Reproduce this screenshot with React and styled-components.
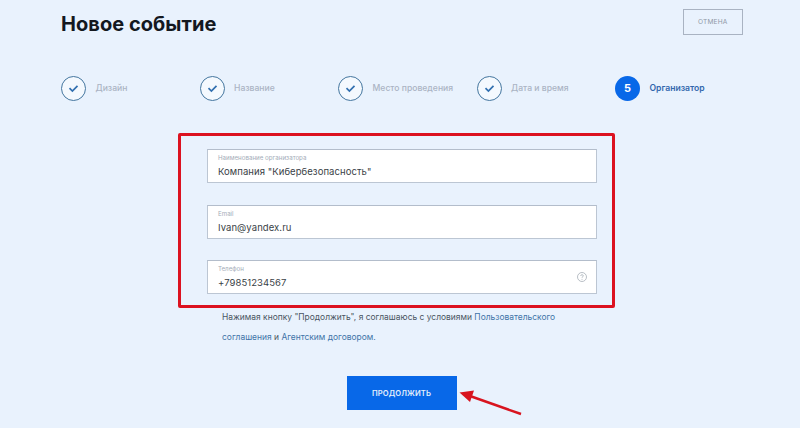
import React from "react";
import styled, { createGlobalStyle } from "styled-components";

const Global = createGlobalStyle`
  html, body { margin: 0; padding: 0; background: #e9f2fd; }
  body { font-family: Inter, "Liberation Sans", sans-serif; }
`;

const Page = styled.div`
  position: relative;
  width: 800px;
  height: 428px;
  overflow: hidden;
  background: #e9f2fd;
  padding: 9px 57.5px 0 61px;
  box-sizing: border-box;
`;

const Header = styled.header`
  display: flex;
  justify-content: space-between;
  align-items: flex-start;
  height: 67px;
`;

const Title = styled.h1`
  margin: 0;
  padding-top: 1px;
  font-size: 20px;
  line-height: 28px;
  font-weight: 700;
  letter-spacing: 0.05px;
  color: #14181f;
`;

const CancelButton = styled.button`
  width: 59.5px;
  height: 25.5px;
  padding: 0;
  background: transparent;
  border: 1px solid #a9b3c2;
  font: 400 6.6px Inter, sans-serif;
  letter-spacing: 0.2px;
  color: #8f98a6;
`;

const Steps = styled.ol`
  display: grid;
  grid-template-columns: repeat(5, 138.5px);
  margin: 0;
  padding: 0;
  list-style: none;
`;

const Step = styled.li`
  display: flex;
  align-items: center;
  gap: 9.5px;
  height: 24px;
`;

const StepCircle = styled.span`
  width: 25px;
  height: 25px;
  box-sizing: border-box;
  flex: none;
  display: flex;
  align-items: center;
  justify-content: center;
  border-radius: 50%;
  background: ${(p) => (p.$active ? "#0868e8" : "#f4f9fe")};
  border: ${(p) => (p.$active ? "none" : "1.5px solid #44769f")};
  color: #fff;
  font-size: 11px;
  font-weight: 700;
`;

const StepLabel = styled.span`
  font-size: 8.6px;
  font-weight: ${(p) => (p.$active ? 600 : 500)};
  color: ${(p) => (p.$active ? "#3268ad" : "#abb4c4")};
  white-space: nowrap;
`;

const Form = styled.form`
  display: flex;
  flex-direction: column;
  gap: 21.5px;
  width: 390px;
  margin: 49px 0 0 146px;
`;

const Field = styled.div`
  position: relative;
  height: 34px;
  box-sizing: border-box;
  padding: 4px 10px 0;
  background: #fff;
  border: 1px solid #bcc6d3;
  border-top-color: #b3bdcb;
`;

const FieldLabel = styled.div`
  font-size: 6.2px;
  line-height: 8px;
  color: #a4acb8;
`;

const FieldValue = styled.div`
  margin-top: 2px;
  font-size: 9.5px;
  line-height: 15px;
  color: #3a3f47;
  letter-spacing: 0.07px;
`;

const HelpIcon = styled.svg`
  position: absolute;
  right: 9.5px;
  top: 11px;
  width: 10px;
  height: 10px;
`;

const Agreement = styled.p`
  margin: 13px 0 0 161px;
  width: 345px;
  font-size: 8.45px;
  line-height: 20px;
  color: #4a5562;
`;

const AgreementLink = styled.a`
  color: #3f74a8;
`;

const ContinueButton = styled.button`
  display: block;
  width: 110px;
  height: 34px;
  margin: 29px 0 0 285.5px;
  padding: 0;
  border: none;
  background: #0868e8;
  color: #e4effc;
  font: 600 7.6px Inter, sans-serif;
  letter-spacing: 0.1px;
`;

const Highlight = styled.div`
  position: absolute;
  left: 178px;
  top: 133px;
  width: 437px;
  height: 175px;
  box-sizing: border-box;
  border: 3px solid #dc1220;
  border-radius: 2px;
  pointer-events: none;
`;

const Arrow = styled.svg`
  position: absolute;
  left: 450px;
  top: 385px;
  width: 80px;
  height: 36px;
  pointer-events: none;
`;

const Check = () => (
  <svg width="11" height="9" viewBox="0 0 11 9" fill="none">
    <path d="M1.5 4.2 4.4 7 9.5 1.8" stroke="#3270b0" strokeWidth="1.7" />
  </svg>
);

const steps = ["Дизайн", "Название", "Место проведения", "Дата и время"];

export default function App() {
  return (
    <Page>
      <Global />
      <Header>
        <Title>Новое событие</Title>
        <CancelButton type="button">ОТМЕНА</CancelButton>
      </Header>
      <Steps>
        {steps.map((s) => (
          <Step key={s}>
            <StepCircle><Check /></StepCircle>
            <StepLabel>{s}</StepLabel>
          </Step>
        ))}
        <Step>
          <StepCircle $active>5</StepCircle>
          <StepLabel $active>Организатор</StepLabel>
        </Step>
      </Steps>
      <Form>
        <Field>
          <FieldLabel>Наименование организатора</FieldLabel>
          <FieldValue>Компания "Кибербезопасность"</FieldValue>
        </Field>
        <Field>
          <FieldLabel>Email</FieldLabel>
          <FieldValue>Ivan@yandex.ru</FieldValue>
        </Field>
        <Field>
          <FieldLabel>Телефон</FieldLabel>
          <FieldValue>+79851234567</FieldValue>
          <HelpIcon viewBox="0 0 10 10" fill="none">
            <circle cx="5" cy="5" r="4.5" stroke="#a7aeb8" strokeWidth="0.8" />
            <path d="M3.7 3.9C3.7 3.1 4.3 2.7 5 2.7s1.3.4 1.3 1.1c0 .9-1.3 1-1.3 2" stroke="#a7aeb8" strokeWidth="0.8" />
            <circle cx="5" cy="7.3" r="0.5" fill="#a7aeb8" />
          </HelpIcon>
        </Field>
      </Form>
      <Agreement>
        Нажимая кнопку "Продолжить", я соглашаюсь с условиями{" "}
        <AgreementLink>Пользовательского</AgreementLink>{" "}
        <AgreementLink>соглашения</AgreementLink> и{" "}
        <AgreementLink>Агентским договором.</AgreementLink>
      </Agreement>
      <ContinueButton type="button">ПРОДОЛЖИТЬ</ContinueButton>
      <Highlight />
      <Arrow viewBox="0 0 80 36">
        <path d="M71 29 20 11" stroke="#d8141f" strokeWidth="2.4" />
        <path d="M9.5 7.5 24 5.5 20 17Z" fill="#d8141f" />
      </Arrow>
    </Page>
  );
}
